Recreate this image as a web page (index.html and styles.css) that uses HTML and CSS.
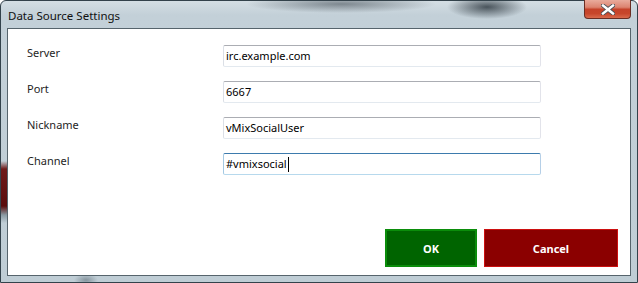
FILE: index.html
```html
<!DOCTYPE html>
<html lang="en">
<head>
    <meta charset="UTF-8">
    <title>Data Source Settings</title>
    <link rel="stylesheet" href="styles.css">
</head>
<body>

    <div class="window">
        <div class="titlebar">
            <span class="title">Data Source Settings</span>
            <span class="close-btn">
                <svg width="14" height="11" viewBox="0 0 14 11">
                    <path d="M2 1.5 L12 9.5 M12 1.5 L2 9.5" stroke="#4a4f55" stroke-width="4.2" stroke-linecap="square"/>
                    <path d="M2 1.5 L12 9.5 M12 1.5 L2 9.5" stroke="#ffffff" stroke-width="2.4" stroke-linecap="square"/>
                </svg>
            </span>
        </div>

        <div class="client">
            <div class="form">
                <span class="field-label">Server</span>
                <div class="textbox">irc.example.com</div>

                <span class="field-label">Port</span>
                <div class="textbox">6667</div>

                <span class="field-label">Nickname</span>
                <div class="textbox">vMixSocialUser</div>

                <span class="field-label">Channel</span>
                <div class="textbox focused">#vmixsocial<span class="caret"></span></div>
            </div>

            <div class="actions">
                <button class="btn btn-ok">OK</button>
                <button class="btn btn-cancel">Cancel</button>
            </div>
        </div>
    </div>

</body>
</html>
```

FILE: styles.css
```css
/* Ventana general */
body {
    margin: 0;
    font-family: "Noto Sans", "Open Sans", sans-serif;
    font-size: 11px;
    background: #ffffff;
}

.window {
    width: 638px;
    height: 283px;
    box-sizing: border-box;
    display: flex;
    flex-direction: column;
    padding: 0 6px 6px;
    border: 1px solid #33424b;
    border-radius: 6px 6px 0 0;
    background:
        linear-gradient(to bottom, transparent 160px, #6e1a1a 168px, #5a0c0c 205px, #8a9aa3 214px, transparent 222px) no-repeat 0 0 / 6px 100%,
        radial-gradient(ellipse 95px 9px at 340px 3px, rgba(70, 80, 88, 0.6), transparent) no-repeat,
        radial-gradient(ellipse 40px 12px at 486px 6px, rgba(40, 50, 58, 0.8), transparent) no-repeat,
        radial-gradient(ellipse 12px 6px at 85px 279px, rgba(110, 125, 135, 0.7), transparent) no-repeat,
        linear-gradient(to bottom, #d4dee4 0, #c3d0d8 14px, #bfcdd5 100%);
}

/* Barra de título */
.titlebar {
    height: 27px;
    display: flex;
    justify-content: space-between;
    align-items: flex-start;
}

.title {
    padding: 7px 0 0 1px;
    color: #111;
    font-size: 11.5px;
    line-height: 16px;
}

.close-btn {
    width: 47px;
    height: 19px;
    box-sizing: border-box;
    margin-top: -1px;
    display: flex;
    align-items: center;
    justify-content: center;
    border: 1px solid #6a2e24;
    border-top: none;
    border-radius: 0 0 4px 4px;
    background: linear-gradient(to bottom, #e9ab9c 0, #dc8470 40%, #c5432a 52%, #c7462b 75%, #d96a4c 100%);
}

.close-btn svg {
    display: block;
}

/* Área cliente */
.client {
    flex: 1;
    display: flex;
    flex-direction: column;
    background: #ffffff;
    border: 1px solid #56646c;
}

.form {
    display: grid;
    grid-template-columns: 196px 318px;
    grid-auto-rows: 22px;
    row-gap: 14px;
    padding: 16px 0 0 19px;
}

.field-label {
    color: #1e1e1e;
    line-height: 16px;
}

.textbox {
    box-sizing: border-box;
    height: 22px;
    padding: 0 2px;
    line-height: 20px;
    color: #000;
    border: 1px solid;
    border-color: #abadb3 #e2e3ea #e3e9ef #dbdfe6;
    border-radius: 2px;
    white-space: nowrap;
}

.textbox.focused {
    border-color: #3d7bad #b5cfe7 #b7d9ed #a4c9e3;
}

.caret {
    display: inline-block;
    width: 1px;
    height: 15px;
    margin-left: 1px;
    background: #000;
    vertical-align: -4px;
}

/* Botones */
.actions {
    margin-top: auto;
    display: flex;
    justify-content: flex-end;
    gap: 7px;
    padding: 0 12px 8px 0;
}

.btn {
    height: 38px;
    box-sizing: border-box;
    color: #ffffff;
    font-family: inherit;
    font-size: 11px;
    font-weight: bold;
    cursor: pointer;
}

.btn-ok {
    width: 92px;
    background: #006400;
    border: 2px solid #0b8d0b;
}

.btn-cancel {
    width: 134px;
    background: #8b0000;
    border: 1px solid #cc1010;
}
```
